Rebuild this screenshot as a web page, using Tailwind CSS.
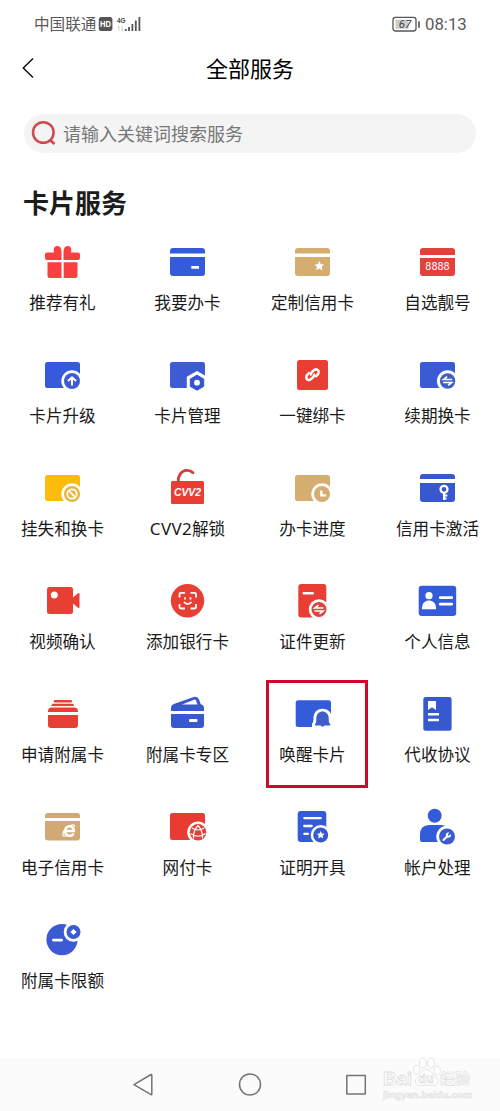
<!DOCTYPE html>
<html lang="zh-CN">
<head>
<meta charset="utf-8">
<title>全部服务</title>
<script src="https://cdn.jsdelivr.net/npm/@tailwindcss/browser@4"></script>
</head>
<body class="bg-white font-['Noto_Sans_CJK_SC',sans-serif]">
<svg class="hidden">
  <defs>
    <path id="star" d="M0-5 1.5-1.8 4.8-1.5 2.4.8 3.1 4.3 0 2.6-3.1 4.3-2.4.8-4.8-1.5-1.5-1.8Z"/>
    <g id="swap" fill="none" stroke="#fff" stroke-width="1.7"><path d="M4.5-1.5H-4L-.5-4.3M-4.5 1.5H4L.5 4.3"/></g>
  </defs>
</svg>
<div class="w-[500px] h-[1111px] flex flex-col overflow-hidden">
  <!-- status bar -->
  <header class="h-12 shrink-0 flex items-center pl-[34px] pr-[33px] text-[#5a5a5a]">
    <span class="text-[15.6px] leading-6 pb-0.5">中国联通</span>
    <svg class="ml-0.5 w-[44px] h-5" viewBox="0 0 44 20">
      <rect x="0.8" y="3" width="13.6" height="14" rx="2.5" fill="#555"/>
      <text x="7.6" y="13.3" text-anchor="middle" font-family="Liberation Sans" font-weight="bold" font-size="8.5" textLength="11" lengthAdjust="spacingAndGlyphs" fill="#fff">HD</text>
      <text x="19" y="9" font-family="Liberation Sans" font-weight="bold" font-size="8" textLength="8.5" lengthAdjust="spacingAndGlyphs" fill="#444">4G</text>
      <path d="M21 12v5M19.7 13.2 21 12M24 17v-5M24 17l1.3-1.3" stroke="#ccc" fill="none"/>
      <path d="M27.8 17v-2M31 17v-4M34.4 17v-7M37.8 17V6.500M41.400 17V3" stroke="#555" stroke-width="1.8"/>
    </svg>
    <svg class="ml-auto w-7 h-5 mr-[5px]" viewBox="0 0 28 20">
      <rect x="1" y="3.400" width="23" height="13.600" rx="2.500" fill="none" stroke="#555" stroke-width="1.3"/>
      <rect x="3.500" y="5.700" width="13" height="9" fill="#ccc"/>
      <path d="M27 7.200v6.500" stroke="#555" stroke-width="1.600"/>
      <text x="13" y="14.200" text-anchor="middle" font-family="Roboto" font-style="italic" font-size="11.500" fill="#444">67</text>
    </svg>
    <span class="w-[42px] whitespace-nowrap font-[Roboto,sans-serif] text-[16.800px] leading-6">08:13</span>
  </header>

  <!-- title bar -->
  <nav class="h-10 shrink-0 flex items-center pl-[22px] pr-[34px] text-black">
    <svg class="w-3 h-6" viewBox="0 0 12 24"><path d="M11 2.500 1.300 12 11 21.500" fill="none" stroke="#111" stroke-width="1.500"/></svg>
    <h1 class="flex-1 text-center text-[22px] leading-8 pb-[3px]">全部服务</h1>
  </nav>

  <!-- search -->
  <div class="mt-[26px] mx-[24px] h-[39px] shrink-0 rounded-full bg-[#f4f4f4] flex items-center pl-[7px] pb-0.5 text-[#777]">
    <svg class="w-[26px] h-[26px]" viewBox="0 0 26 26"><circle cx="12.300" cy="12.500" r="10.300" fill="none" stroke="#d3484e" stroke-width="2.500"/><path d="M18.500 19.500 23.500 24" stroke="#d3484e" stroke-width="2.700"/></svg>
    <span class="ml-[6px] text-[18px] leading-7">请输入关键词搜索服务</span>
  </div>

  <h2 class="mt-[30px] ml-[23px] h-[38px] shrink-0 text-[26px] leading-[38px] font-bold text-[#1c1c1c]">卡片服务</h2>

  <main class="mt-[19px] shrink-0 grid grid-cols-4 auto-rows-[113px] text-[16.600px] leading-6 text-[#1a1a1a] *:flex *:flex-col *:items-center *:gap-[5px] *:whitespace-nowrap">
    <div><svg class="w-[45px] h-[45px]" viewBox="0 0 45 45" fill="#fb3e40"><path d="M7 12.500H14Q12.800 6 17.300 6 21.500 6 21.500 12V20H7Q5 20 5 18V14.500Q5 12.500 7 12.500ZM38 12.500H31Q32.200 6 27.700 6 23.500 6 23.500 12V20H38Q40 20 40 18V14.500Q40 12.500 38 12.500ZM7.500 22.300H21.500V38H9.500Q7.500 38 7.500 36ZM23.700 22.300H37.500V36Q37.500 38 35.500 38H23.700Z"/></svg><span>推荐有礼</span></div>
    <div><svg class="w-[45px] h-[45px]" viewBox="0 0 45 45"><rect x="5" y="8" width="35" height="28" rx="3" fill="#345cda"/><path fill="#fff" d="M5 13.500H40V17H5ZM26.300 26H34V28.700H26.300Z"/></svg><span>我要办卡</span></div>
    <div><svg class="w-[45px] h-[45px]" viewBox="0 0 45 45"><rect x="5" y="8" width="35" height="28" rx="3" fill="#d5ad6f"/><path fill="#fff" d="M5 13.500H40V17H5Z"/><use href="#star" transform="translate(29.300 26)" fill="#fff"/></svg><span>定制信用卡</span></div>
    <div><svg class="w-[45px] h-[45px]" viewBox="0 0 45 45"><rect x="5" y="8" width="35" height="28" rx="3" fill="#e5403a"/><path fill="#fff" d="M5 15H40V18H5Z"/><text x="22.500" y="29.500" text-anchor="middle" font-family="Roboto" font-size="10.800" fill="#fff">8888</text></svg><span>自选靓号</span></div>

    <div><svg class="w-[45px] h-[45px]" viewBox="0 0 45 45"><rect x="5" y="9" width="35" height="26" rx="2.500" fill="#355adb"/><circle cx="32" cy="28" r="10.700" fill="#fff"/><circle cx="32" cy="28" r="8" fill="#3f5dd0"/><path d="M32 32.500V24.500M28 28 32 24.300 36 28" fill="none" stroke="#fff" stroke-width="2"/></svg><span>卡片升级</span></div>
    <div><svg class="w-[45px] h-[45px]" viewBox="0 0 45 45"><rect x="5" y="9" width="35" height="26" rx="2.500" fill="#3d5bd3"/><path fill="#fff" d="M32 18 42.200 23.800V35.600L32 41.400 21.800 35.600V23.800Z"/><path fill="#3556cf" stroke="#3556cf" stroke-linejoin="round" d="M32 22.200 38.700 26V33.400L32 37.200 25.300 33.400V26Z"/><circle cx="32" cy="29.700" r="2.900" fill="#fff"/></svg><span>卡片管理</span></div>
    <div><svg class="w-[45px] h-[45px]" viewBox="0 0 45 45"><rect x="7" y="7" width="31" height="30" rx="2.500" fill="#e83e34"/><g fill="none" stroke="#fff" stroke-width="2.500"><path d="M21.200 22.500C19.800 20.800 22.300 18.600 24.200 17.100S28.600 16.600 28.700 19 27.600 21.900 25.200 23.900"/><path d="M23.800 20.700C25.200 22.400 22.700 24.800 20.800 26.300S16.400 26.800 16.300 24.400 17.400 21.500 19.800 19.500"/></g></svg><span>一键绑卡</span></div>
    <div><svg class="w-[45px] h-[45px]" viewBox="0 0 45 45"><rect x="5" y="9" width="35" height="26" rx="2.500" fill="#3b5bd5"/><circle cx="32.600" cy="28" r="10.700" fill="#fff"/><circle cx="32.600" cy="28" r="7.700" fill="#3f5dc8"/><use href="#swap" x="32.600" y="28"/></svg><span>续期换卡</span></div>

    <div><svg class="w-[45px] h-[45px]" viewBox="0 0 45 45"><rect x="5" y="9" width="35" height="26" rx="2.500" fill="#fdbb0a"/><circle cx="32" cy="28" r="10.700" fill="#fff"/><circle cx="32" cy="28" r="8" fill="#e8b63f"/><circle cx="32" cy="28" r="4.700" fill="none" stroke="#fff" stroke-width="1.700"/><path d="M28.700 24.700 35.300 31.300" stroke="#fff" stroke-width="1.700"/></svg><span>挂失和换卡</span></div>
    <div><svg class="w-[45px] h-[45px]" viewBox="0 0 45 45"><rect x="6" y="15" width="33" height="23" rx="1.500" fill="#e83e34"/><path d="M13.300 15.500C12.800 9.500 16.500 4.700 21.500 4.400 24.500 4.200 26.500 5.200 28 6.700" fill="none" stroke="#cf4039" stroke-width="2.800" stroke-linecap="round"/><text x="22.500" y="30.200" text-anchor="middle" font-family="Liberation Sans" font-weight="bold" font-style="italic" font-size="10.500" textLength="27" fill="#fff">CVV2</text></svg><span><span class="font-['Noto_Sans'] text-[17px] tracking-[0.300px]">CVV2</span>解锁</span></div>
    <div><svg class="w-[45px] h-[45px]" viewBox="0 0 45 45"><rect x="5" y="9" width="35" height="26" rx="2.500" fill="#d5ad6f"/><circle cx="32" cy="28" r="10.700" fill="#fff"/><circle cx="32" cy="28" r="8" fill="#d3ad73"/><path d="M31.300 24.500V29.300H36" fill="none" stroke="#fff" stroke-width="2.300"/></svg><span>办卡进度</span></div>
    <div><svg class="w-[45px] h-[45px]" viewBox="0 0 45 45"><rect x="5" y="8" width="35" height="28" rx="3" fill="#3858cf"/><path fill="#fff" d="M5 13H40V17H5Z"/><g fill="none" stroke="#fff"><circle cx="29" cy="23.300" r="3.500" stroke-width="2.200"/><path d="M29 26.500V34M29 29.500H32.300M29 32.500H31.500" stroke-width="2"/></g></svg><span>信用卡激活</span></div>

    <div><svg class="w-[45px] h-[45px]" viewBox="0 0 45 45" fill="#e83e34"><rect x="7" y="8" width="26" height="27" rx="2.500"/><path d="M33 18.500 38 14.200Q39.500 13.500 39.500 15V28Q39.500 29.500 38 28.800L33 24.500Z"/><circle cx="14.300" cy="16" r="3.500" fill="#fff"/></svg><span>视频确认</span></div>
    <div><svg class="w-[45px] h-[45px]" viewBox="0 0 45 45"><circle cx="22.500" cy="21.700" r="16.700" fill="#e83e34"/><g fill="none" stroke="#fff" stroke-width="1.800"><path d="M20 13.900H16Q14.500 13.900 14.500 15.400V18.500M25.500 13.900H29.500Q31 13.900 31 15.400V18.500M14.500 25V28Q14.500 29.500 16 29.500H20M31 25V28Q31 29.500 29.500 29.500H25.500M20 18.300V20.500M25.500 18.300V20.500M18.900 23Q22.700 27 26.500 23"/></g></svg><span>添加银行卡</span></div>
    <div><svg class="w-[45px] h-[45px]" viewBox="0 0 45 45"><rect x="8.300" y="5" width="28" height="33.500" rx="3" fill="#e83e34"/><path fill="#fff" d="M12.700 13H23.700V15.500H12.700Z"/><circle cx="29" cy="30.500" r="10.200" fill="#fff"/><circle cx="29" cy="30.500" r="7.500" fill="#dc443c"/><use href="#swap" x="29" y="30.500"/></svg><span>证件更新</span></div>
    <div><svg class="w-[45px] h-[45px]" viewBox="0 0 45 45"><rect x="3.700" y="6.700" width="37.500" height="30.300" rx="3" fill="#345cda"/><g fill="#fff"><circle cx="14" cy="16.700" r="3.600"/><path d="M7 30.300V28.500C7.500 19 20.500 19 21 28.500V30.300Z"/><rect x="24" y="17.200" width="14" height="2.700" rx="1"/><rect x="24" y="23.700" width="14" height="2.700" rx="1"/></g></svg><span>个人信息</span></div>

    <div><svg class="w-[45px] h-[45px]" viewBox="0 0 45 45" fill="#e83e34"><rect x="13.700" y="8" width="18.300" height="2.500" rx="1"/><path d="M12.500 11.800H33L34.500 14H11ZM8 20V19Q8 15.500 11.500 15.500H34Q38 15.500 38 19V20ZM8 23H38V33Q38 36 35 36H11Q8 36 8 33Z"/></svg><span>申请附属卡</span></div>
    <div><svg class="w-[45px] h-[45px]" viewBox="0 0 45 45"><path fill="#3858cf" fill-rule="evenodd" d="M6 19V16Q6 13 9.500 11.800L28 5.200Q32.500 3.500 34 7.500L35.800 12.200Q39 13 39 16V19ZM17 12.500H32.500L30.800 8Q30.300 7.300 29 7.800ZM6 22H39V33Q39 36 36 36H9Q6 36 6 33Z"/><rect x="24" y="27" width="8.500" height="2.900" rx="1" fill="#fff"/></svg><span>附属卡专区</span></div>
    <div class="relative"><svg class="w-[45px] h-[45px]" viewBox="0 0 45 45"><rect x="5.700" y="8.300" width="35.300" height="26.700" rx="2.500" fill="#345cda"/><path fill="#fff" d="M42 36H22V31.500Q23.500 31 23.500 26C23.500 13.500 41.500 13.500 42 26Z"/><path fill="#3f5dcc" d="M25 33.500V32Q26.300 31.500 26.300 26.500C26.300 17.300 38.700 17.300 38.700 26.500Q38.700 31.500 40.300 32V33.500H34.300Q32.500 36 30.700 33.500Z"/></svg><span>唤醒卡片</span>
      <div class="absolute left-[16px] top-[-12px] w-[102px] h-[108px] border-[3px] border-[#cc0a2d]"></div></div>
    <div><svg class="w-[45px] h-[45px]" viewBox="0 0 45 45"><rect x="8.300" y="5" width="28.300" height="33.700" rx="2.500" fill="#3858cf"/><path fill="#fff" d="M13 9H21V18L17 15.200 13 18ZM13 21H24V23.600H13ZM13 26.700H24V29.300H13Z"/></svg><span>代收协议</span></div>

    <div><svg class="w-[45px] h-[45px]" viewBox="0 0 45 45"><rect x="5" y="8" width="35" height="27.500" rx="3" fill="#d0a974"/><path fill="#fff" d="M5 13H40V16H5Z"/><g fill="none" stroke="#fff"><path d="M25.200 26H33.800C33.800 19.500 25.200 19.500 25.100 26 25 31.500 31.800 32.200 33.500 28.500" stroke-width="2.500"/><path d="M34.500 22C35.500 18.800 30.500 19.200 26 23.500S21.800 33 26.500 30.500" stroke-width="1.200"/></g></svg><span>电子信用卡</span></div>
    <div><svg class="w-[45px] h-[45px]" viewBox="0 0 45 45"><rect x="5" y="8" width="35" height="27" rx="2.500" fill="#e93b32"/><circle cx="33" cy="27.300" r="10.800" fill="#fff"/><circle cx="33" cy="27.300" r="8.300" fill="#dc4239"/><path d="M33 20.500Q28 26 28.500 33.500M33 20.500Q38 26 37.500 33.500M27 23Q33 27 39 23M25.500 28.500Q33 34 40.500 28.500" fill="none" stroke="#fff" stroke-width="1.200"/></svg><span>网付卡</span></div>
    <div><svg class="w-[45px] h-[45px]" viewBox="0 0 45 45"><rect x="7.700" y="6" width="28.600" height="31" rx="3" fill="#345cda"/><path d="M14.300 13.100H30.700M14.300 21H21.700M14.300 28.800H18" stroke="#fff" stroke-width="2.300" stroke-linecap="round"/><circle cx="30.700" cy="30" r="10" fill="#fff"/><circle cx="30.700" cy="30" r="7.500" fill="#3858cf"/><use href="#star" transform="translate(30.700 30) scale(.8)" fill="#fff"/></svg><span>证明开具</span></div>
    <div><svg class="w-[45px] h-[45px]" viewBox="0 0 45 45" fill="#345cda"><circle cx="19.700" cy="10.700" r="7"/><path d="M5 34V30Q5 20 14 20H26Q31 20 33 24V37H7Q5 37 5 35Z"/><circle cx="32" cy="31.500" r="10.700" fill="#fff"/><circle cx="32" cy="31.500" r="8" fill="#3c5bcd"/><path d="M28.500 35 32 31.500" stroke="#fff" stroke-width="2" stroke-linecap="round"/><path d="M34.300 27.600A2.600 2.600 0 1 0 35.900 29.200L33.700 30.800 32.700 29.800Z" fill="#fff"/></svg><span>帐户处理</span></div>

    <div><svg class="w-[45px] h-[45px]" viewBox="0 0 45 45"><circle cx="22" cy="21.600" r="15.600" fill="#3c5ad4"/><rect x="12" y="20.700" width="11" height="2.800" rx="1.400" fill="#fff"/><circle cx="33.500" cy="14" r="9.800" fill="#fff"/><circle cx="33.500" cy="14" r="7" fill="#3c5bcd"/><path fill="#fff" d="M33.500 10.900 36.600 14 33.500 17.100 30.400 14Z"/></svg><span>附属卡限额</span></div>
  </main>

  <!-- system navigation -->
  <footer class="mt-auto h-[54px] shrink-0 bg-[#fbfbfb]">
    <svg class="w-[500px] h-[54px]" viewBox="0 0 500 54" fill="none" stroke="#747474" stroke-width="1.500" stroke-linejoin="round">
      <path d="M134 27.600 151 17.500Q151.800 17.300 151.800 18V37Q151.800 37.800 151 37.600Z"/>
      <circle cx="250" cy="27.500" r="10.500"/>
      <rect x="346.800" y="18.500" width="18.500" height="18.500"/>
      <g fill="#fff" stroke="#dedede" stroke-width=".8">
        <ellipse cx="416.500" cy="12.500" rx="3" ry="4.300"/><ellipse cx="422.800" cy="6" rx="3.400" ry="4.800"/><ellipse cx="431" cy="6" rx="3.400" ry="4.800"/><ellipse cx="437.300" cy="13.500" rx="3" ry="4.300"/>
        <path d="M426.500 12.500C431 12.500 432 17 436 20.500 440 25 437 29 432 28.500Q426.500 27.500 421.500 28.500C415 29 413.500 24 418 19.500 421.500 16 422 12.500 426.500 12.500Z"/>
        <g font-family="Liberation Sans" font-weight="bold"><text x="383" y="27.500" font-size="18.500" textLength="29" lengthAdjust="spacingAndGlyphs">Bai</text><text x="418.500" y="26" font-size="12" textLength="15">du</text><text x="383" y="40.500" font-size="8.500" textLength="89" lengthAdjust="spacingAndGlyphs" fill="#f8f8f8" stroke-width=".5">jingyan.baidu.com</text></g>
        <text x="440" y="26.500" font-family="Noto Sans CJK SC" font-weight="bold" font-size="15" stroke-width=".6">经验</text>
      </g>
    </svg>
  </footer>
</div>
</body>
</html>
